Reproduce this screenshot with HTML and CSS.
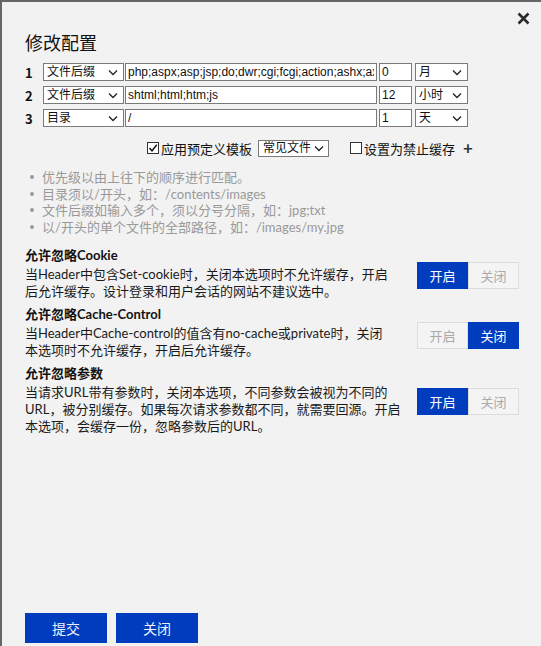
FILE: index.html
```html
<!DOCTYPE html>
<html lang="zh-CN">
<head>
<meta charset="utf-8">
<title>修改配置</title>
<link rel="stylesheet" href="styles.css">
</head>
<body>
<div class="dialog">
  <button class="close" type="button" aria-label="关闭">
    <svg width="13" height="13" viewBox="0 0 13 13"><path d="M1.5 1.5 L11.5 11.5 M11.5 1.5 L1.5 11.5" stroke="#2b2b2b" stroke-width="2.6" fill="none"/></svg>
  </button>
  <h1 class="title">修改配置</h1>

  <div class="rules">
    <div class="rule">
      <span class="idx">1</span>
      <span class="sel sel-type">文件后缀<svg class="chev" width="10" height="7" viewBox="0 0 10 7"><path d="M1 1.5 L5 5.5 L9 1.5" stroke="#222" stroke-width="1.3" fill="none"/></svg></span>
      <input class="inp inp-val" type="text" value="php;aspx;asp;jsp;do;dwr;cgi;fcgi;action;ashx;axd">
      <input class="inp inp-num" type="text" value="0">
      <span class="sel sel-unit">月<svg class="chev" width="10" height="7" viewBox="0 0 10 7"><path d="M1 1.5 L5 5.5 L9 1.5" stroke="#222" stroke-width="1.3" fill="none"/></svg></span>
    </div>
    <div class="rule">
      <span class="idx">2</span>
      <span class="sel sel-type">文件后缀<svg class="chev" width="10" height="7" viewBox="0 0 10 7"><path d="M1 1.5 L5 5.5 L9 1.5" stroke="#222" stroke-width="1.3" fill="none"/></svg></span>
      <input class="inp inp-val" type="text" value="shtml;html;htm;js">
      <input class="inp inp-num" type="text" value="12">
      <span class="sel sel-unit">小时<svg class="chev" width="10" height="7" viewBox="0 0 10 7"><path d="M1 1.5 L5 5.5 L9 1.5" stroke="#222" stroke-width="1.3" fill="none"/></svg></span>
    </div>
    <div class="rule">
      <span class="idx">3</span>
      <span class="sel sel-type">目录<svg class="chev" width="10" height="7" viewBox="0 0 10 7"><path d="M1 1.5 L5 5.5 L9 1.5" stroke="#222" stroke-width="1.3" fill="none"/></svg></span>
      <input class="inp inp-val" type="text" value="/">
      <input class="inp inp-num" type="text" value="1">
      <span class="sel sel-unit">天<svg class="chev" width="10" height="7" viewBox="0 0 10 7"><path d="M1 1.5 L5 5.5 L9 1.5" stroke="#222" stroke-width="1.3" fill="none"/></svg></span>
    </div>
  </div>

  <div class="opts">
    <span class="cb"><svg width="10" height="10" viewBox="0 0 10 10"><path d="M1.5 5 L4 7.8 L8.8 1.8" stroke="#111" stroke-width="1.4" fill="none"/></svg></span>
    <span class="opt-label">应用预定义模板</span>
    <span class="sel sel-tpl">常见文件<svg class="chev" width="10" height="7" viewBox="0 0 10 7"><path d="M1 1.5 L5 5.5 L9 1.5" stroke="#222" stroke-width="1.3" fill="none"/></svg></span>
    <span class="cb cb-2"></span>
    <span class="opt-label">设置为禁止缓存</span>
    <span class="plus">+</span>
  </div>

  <ul class="tips">
    <li>优先级以由上往下的顺序进行匹配。</li>
    <li>目录须以/开头，如：/contents/images</li>
    <li>文件后缀如输入多个，须以分号分隔，如：jpg;txt</li>
    <li>以/开头的单个文件的全部路径，如：/images/my.jpg</li>
  </ul>

  <div class="sections">
    <div class="sec">
      <div class="sec-text">
        <div class="sec-title">允许忽略Cookie</div>
        <div class="sec-desc">当Header中包含Set-cookie时，关闭本选项时不允许缓存，开启<br>后允许缓存。设计登录和用户会话的网站不建议选中。</div>
      </div>
      <div class="toggle">
        <span class="tg on">开启</span><span class="tg">关闭</span>
      </div>
    </div>
    <div class="sec">
      <div class="sec-text">
        <div class="sec-title">允许忽略Cache-Control</div>
        <div class="sec-desc">当Header中Cache-control的值含有no-cache或private时，关闭<br>本选项时不允许缓存，开启后允许缓存。</div>
      </div>
      <div class="toggle toggle-low">
        <span class="tg">开启</span><span class="tg on">关闭</span>
      </div>
    </div>
    <div class="sec">
      <div class="sec-text">
        <div class="sec-title">允许忽略参数</div>
        <div class="sec-desc">当请求URL带有参数时，关闭本选项，不同参数会被视为不同的<br>URL，被分别缓存。如果每次请求参数都不同，就需要回源。开启<br>本选项，会缓存一份，忽略参数后的URL。</div>
      </div>
      <div class="toggle">
        <span class="tg on">开启</span><span class="tg">关闭</span>
      </div>
    </div>
  </div>

  <div class="footer">
    <button class="btn" type="button">提交</button>
    <button class="btn" type="button">关闭</button>
  </div>
</div>
</body>
</html>
```
FILE: styles.css
```css
* { box-sizing: border-box; }
html, body { margin: 0; padding: 0; }
body {
  background: #f2f2f2;
  font-family: "Lato", "Noto Sans CJK SC", sans-serif;
  font-size: 13px;
  color: #1a1a1a;
}
.dialog {
  position: relative;
  width: 541px;
  height: 646px;
  border-top: 2px solid #666;
  border-left: 2px solid #666;
  padding: 0 22px 3px 23px;
  display: flex;
  flex-direction: column;
  background: #f2f2f2;
}
.close {
  position: absolute;
  top: 9px;
  right: 10px;
  width: 15px;
  height: 15px;
  padding: 1px;
  border: 0;
  background: transparent;
  display: flex;
}
.title {
  margin: 28px 0 9px;
  font-family: "Noto Sans CJK SC", sans-serif;
  font-size: 18px;
  line-height: 24px;
  font-weight: normal;
  color: #111;
}
.rules {
  display: flex;
  flex-direction: column;
  gap: 5px;
}
.rule {
  display: flex;
  align-items: center;
  height: 18px;
}
.idx {
  width: 18px;
  font-family: "Noto Sans CJK SC", sans-serif;
  font-weight: bold;
  font-size: 13px;
  color: #111;
}
.sel {
  display: flex;
  align-items: center;
  justify-content: space-between;
  height: 18px;
  border: 1px solid #7a7a7a;
  background: #fff;
  padding: 0 5px 0 3px;
  font-family: "Liberation Sans", "Noto Sans CJK SC", sans-serif;
  font-size: 12px;
  line-height: 16px;
  color: #111;
  white-space: nowrap;
}
.chev { flex: none; }
.sel-type { width: 81px; }
.sel-unit { width: 53px; margin-left: 3px; }
.inp {
  height: 18px;
  border: 1px solid #7a7a7a;
  background: #fff;
  padding: 0 2px;
  margin: 0;
  font-family: "Liberation Sans", "Noto Sans CJK SC", sans-serif;
  font-size: 12px;
  color: #111;
  outline: none;
}
.inp-val { width: 252px; margin-left: 1px; }
.inp-num { width: 33px; margin-left: 2px; }

.opts {
  display: flex;
  align-items: center;
  height: 18px;
  margin-top: 12px;
  padding-left: 122px;
}
.cb {
  width: 12px;
  height: 12px;
  border: 1px solid #333;
  background: #fff;
  display: flex;
  align-items: center;
  justify-content: center;
}
.cb-2 { margin-left: 21px; }
.opt-label {
  margin-left: 2px;
  font-size: 13px;
  color: #111;
}
.sel-tpl {
  width: 71px;
  height: 17px;
  margin-left: 6px;
  padding: 0 4px 0 4px;
}
.plus {
  margin-left: 8px;
  font-size: 17px;
  font-weight: bold;
  line-height: 18px;
  color: #333;
}

.tips {
  list-style: none;
  margin: 12px 0 0;
  padding: 0;
  color: #999;
  font-size: 13px;
  line-height: 16.5px;
}
.tips li {
  display: flex;
  align-items: center;
  height: 16.5px;
}
.tips li::before {
  content: "";
  width: 4px;
  height: 4px;
  border-radius: 50%;
  background: #9a9a9a;
  margin: 0 8px 0 5px;
  flex: none;
}

.sections {
  margin-top: 12px;
  display: flex;
  flex-direction: column;
  gap: 6px;
}
.sec {
  display: flex;
  justify-content: space-between;
  align-items: center;
}
.sec-text { width: 380px; }
.sec-title {
  font-weight: bold;
  line-height: 17px;
  margin-bottom: 2px;
  color: #111;
}
.sec-desc {
  line-height: 17px;
  white-space: nowrap;
  color: #1a1a1a;
}
.toggle {
  display: flex;
  margin-top: 3px;
}
.toggle-low { margin-top: 6px; }
.tg {
  width: 51px;
  height: 27px;
  display: flex;
  align-items: center;
  justify-content: center;
  border: 1px solid #dcdcdc;
  background: #f4f4f4;
  color: #aaa;
  font-family: "Noto Sans CJK SC", sans-serif;
  font-size: 13px;
}
.tg.on {
  background: #003cbe;
  border-color: #003cbe;
  color: #fff;
}

.footer {
  margin-top: auto;
  display: flex;
  gap: 9px;
  padding-left: 0;
}
.btn {
  width: 82px;
  height: 30px;
  border: 0;
  background: #003cbe;
  color: #eef2ff;
  font-family: "Noto Sans CJK SC", sans-serif;
  font-size: 14px;
  padding: 0;
}
```
